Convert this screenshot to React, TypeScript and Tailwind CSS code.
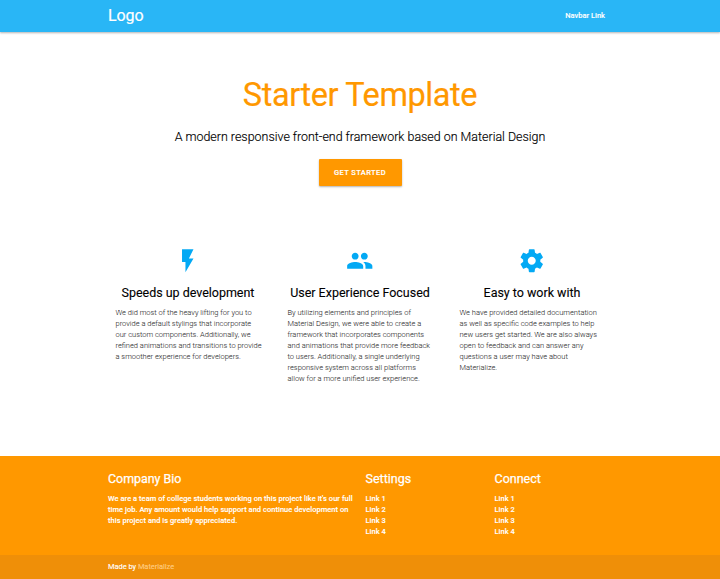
import React from 'react';

const features = [
  {
    title: 'Speeds up development',
    icon: 'M7 2v11h3v9l7-12h-4l4-8z',
    lines: ['We did most of the heavy lifting for you to', 'provide a default stylings that incorporate', 'our custom components. Additionally, we', 'refined animations and transitions to provide', 'a smoother experience for developers.'],
  },
  {
    title: 'User Experience Focused',
    icon: 'M16 11c1.66 0 2.99-1.34 2.99-3S17.66 5 16 5s-3 1.34-3 3 1.34 3 3 3zm-8 0c1.66 0 2.99-1.34 2.99-3S9.66 5 8 5 5 6.34 5 8s1.34 3 3 3zm0 2c-2.33 0-7 1.17-7 3.5V19h14v-2.5c0-2.33-4.67-3.5-7-3.5zm8 0c-.29 0-.62.02-.97.05 1.16.84 1.97 1.97 1.97 3.45V19h6v-2.5c0-2.33-4.67-3.5-7-3.5z',
    lines: ['By utilizing elements and principles of', 'Material Design, we were able to create a', 'framework that incorporates components', 'and animations that provide more feedback', 'to users. Additionally, a single underlying', 'responsive system across all platforms', 'allow for a more unified user experience.'],
  },
  {
    title: 'Easy to work with',
    icon: 'M19.43 12.98c.04-.32.07-.64.07-.98s-.03-.66-.07-.98l2.11-1.65c.19-.15.24-.42.12-.64l-2-3.46c-.12-.22-.39-.3-.61-.22l-2.49 1c-.52-.4-1.08-.73-1.69-.98l-.38-2.65C14.46 2.18 14.25 2 14 2h-4c-.25 0-.46.18-.49.42l-.38 2.65c-.61.25-1.17.59-1.69.98l-2.49-1c-.23-.09-.49 0-.61.22l-2 3.46c-.13.22-.07.49.12.64l2.11 1.65c-.04.32-.07.65-.07.98s.03.66.07.98l-2.11 1.65c-.19.15-.24.42-.12.64l2 3.46c.12.22.39.3.61.22l2.49-1c.52.4 1.08.73 1.69.98l.38 2.65c.03.24.24.42.49.42h4c.25 0 .46-.18.49-.42l.38-2.65c.61-.25 1.17-.59 1.69-.98l2.49 1c.23.09.49 0 .61-.22l2-3.46c.12-.22.07-.49-.12-.64l-2.11-1.65zM12 15.5c-1.93 0-3.5-1.57-3.5-3.5s1.57-3.5 3.5-3.5 3.5 1.57 3.5 3.5-1.57 3.5-3.5 3.5z',
    lines: ['We have provided detailed documentation', 'as well as specific code examples to help', 'new users get started. We are also always', 'open to feedback and can answer any', 'questions a user may have about', 'Materialize.'],
  },
];

function LinkColumn({ title }: { title: string }) {
  return (
    <div className="w-[129px] shrink-0">
      <h5 className="text-[12.5px] leading-[15px] [-webkit-text-stroke:0.25px_white]">{title}</h5>
      <ul className="mt-[7px] text-[7.5px] font-medium leading-[11px] tracking-[0.03px] [-webkit-text-stroke:0.1px_white]">
        {[1, 2, 3, 4].map((n) => (
          <li key={n}><a href="#">Link {n}</a></li>
        ))}
      </ul>
    </div>
  );
}

export default function App() {
  return (
    <div className="flex h-[579px] w-[720px] flex-col overflow-hidden bg-white font-['Roboto',sans-serif] text-black">
      <nav className="h-8 shrink-0 bg-[#29b6f6] text-white shadow-[0_1px_2px_rgba(0,0,0,0.3)]">
        <div className="mx-auto flex h-8 w-[504px] items-center justify-between pr-[7px]">
          <a href="#" className="text-[16px] leading-8 tracking-[-0.1px] [-webkit-text-stroke:0.2px_white]">Logo</a>
          <a href="#" className="text-[7.5px] font-medium [-webkit-text-stroke:0.1px_white]">Navbar Link</a>
        </div>
      </nav>
      <main className="flex flex-col items-center">
        <h1 className="mt-[43px] whitespace-nowrap text-[32.5px] leading-[41px] tracking-[-0.42px] text-[#ff9800] [-webkit-text-stroke:0.2px_#ff9800]">Starter Template</h1>
        <p className="mt-3 whitespace-nowrap text-[12.45px] font-light leading-[17px] [-webkit-text-stroke:0.15px_black]">A modern responsive front-end framework based on Material Design</p>
        <a href="#" className="mt-[14px] flex h-[27px] w-[83px] items-center justify-center rounded-[1px] bg-[#ff9800] text-[7.5px] font-medium tracking-[0.4px] text-white shadow-[0_1px_2px_rgba(0,0,0,0.3)] [-webkit-text-stroke:0.15px_white]">GET STARTED</a>
        <div className="mt-[61px] flex w-[516px]">
          {features.map((f) => (
            <section key={f.title} className="w-[172px] px-[13.5px]">
              <svg viewBox="0 0 24 24" className="mx-auto block size-[27.5px] fill-[#03a9f4]"><path d={f.icon} /></svg>
              <h5 className="-mx-3 mt-[10.5px] whitespace-nowrap text-center text-[12.5px] leading-4 tracking-[-0.02px] [-webkit-text-stroke:0.1px_black]">{f.title}</h5>
              <p className="mt-[6px] whitespace-nowrap text-[7.5px] font-light leading-[11px] text-[#333] [-webkit-text-stroke:0.05px_#333]">
                {f.lines.map((line) => <span key={line} className="block">{line}</span>)}
              </p>
            </section>
          ))}
        </div>
      </main>
      <footer className="mt-auto flex h-[123px] shrink-0 flex-col justify-between bg-[#ff9800] text-white">
        <div className="mx-auto flex w-[504px] pt-[15px]">
          <div className="w-[257.5px] shrink-0">
            <h5 className="text-[12.4px] leading-[15px] [-webkit-text-stroke:0.25px_white]">Company Bio</h5>
            <p className="mt-[7px] whitespace-nowrap text-[7.5px] font-medium leading-[11px] tracking-[0.03px] [-webkit-text-stroke:0.1px_white]">
              We are a team of college students working on this project like it's our full<br />
              time job. Any amount would help support and continue development on<br />
              this project and is greatly appreciated.
            </p>
          </div>
          <LinkColumn title="Settings" />
          <LinkColumn title="Connect" />
        </div>
        <div className="h-6 bg-[#ef8f08]">
          <p className="mx-auto w-[504px] text-[7.5px] leading-6 tracking-[-0.05px] [-webkit-text-stroke:0.1px]">Made by <a href="#" className="text-[#ffcc80]">Materialize</a></p>
        </div>
      </footer>
    </div>
  );
}
